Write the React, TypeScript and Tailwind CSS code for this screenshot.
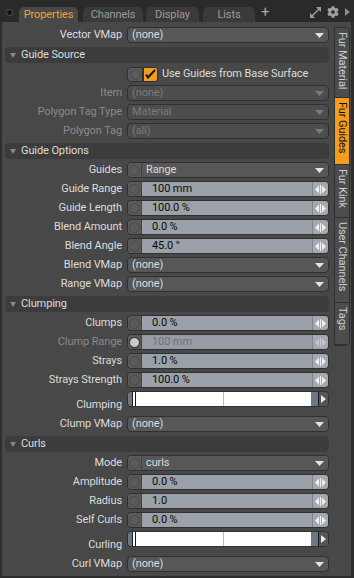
import React from "react";
import { FaCog } from "react-icons/fa";

const Caret = ({ dim = false }: { dim?: boolean }) => (
  <svg width="9" height="5" viewBox="0 0 9 5" className="shrink-0">
    <path d="M0 0H9L4.5 5Z" fill={dim ? "#7a7a7a" : "#e2e2e2"} />
  </svg>
);

const Spin = ({ dim = false }: { dim?: boolean }) => (
  <svg width="11" height="9" viewBox="0 0 11 9">
    <path d="M0 4.5L4 0.5V8.5Z" fill={dim ? "#c4c8cc" : "#eef0f2"} />
    <rect x="5" y="0" width="1" height="9" fill={dim ? "#c4c8cc" : "#eef0f2"} />
    <path d="M7 0.5L11 4.5L7 8.5Z" fill={dim ? "#c4c8cc" : "#eef0f2"} />
  </svg>
);

const Circle = ({ filled = false }: { filled?: boolean }) => (
  <div
    className={`w-[11px] h-[11px] rounded-full border ${
      filled ? "bg-[#c9c9c9] border-[#262626]" : "bg-[#5a5a5a] border-[#4a4a4a]"
    }`}
  />
);

function Label({ children, dim = false }: { children: React.ReactNode; dim?: boolean }) {
  return (
    <div
      className={`w-[117px] shrink-0 text-right whitespace-nowrap leading-[16px] ${
        dim ? "text-[#8a8a8a]" : "text-[#dcdcdc]"
      }`}
    >
      {children}
    </div>
  );
}

function Row({ label, dim, children }: { label: string; dim?: boolean; children: React.ReactNode }) {
  return (
    <div className="flex items-center gap-[5px] h-[16px]">
      <Label dim={dim}>{label}</Label>
      <div className="w-[202px] h-[16px] shrink-0">{children}</div>
    </div>
  );
}

function Dropdown({ value, disabled }: { value: string; disabled?: boolean }) {
  return (
    <div
      className={`flex items-center h-full rounded-[4px] border border-[#303030] pl-[4px] pr-[4px] ${
        disabled ? "bg-[#4d4d4d] text-[#7a7a7a]" : "bg-[#575757] text-[#dadada]"
      }`}
    >
      <span className="flex-1 leading-[14px]">{value}</span>
      <Caret dim={disabled} />
    </div>
  );
}

function CircleDropdown({ value }: { value: string }) {
  return (
    <div className="flex h-full rounded-[4px] border border-[#303030] overflow-hidden">
      <div className="w-[14px] shrink-0 bg-[#5a5a5a] border-r border-[#444] flex items-center justify-center">
        <Circle />
      </div>
      <div className="flex-1 flex items-center bg-[#575757] text-[#dadada] pl-[4px] pr-[4px]">
        <span className="flex-1 leading-[14px]">{value}</span>
        <Caret />
      </div>
    </div>
  );
}

function NumField({ value, disabled }: { value: string; disabled?: boolean }) {
  return (
    <div className="flex h-full rounded-[4px] border border-[#303030] overflow-hidden">
      <div className="w-[14px] shrink-0 bg-[#5a5a5a] border-r border-[#444] flex items-center justify-center">
        <Circle filled={disabled} />
      </div>
      <div
        className={`flex-1 flex items-center pl-[10px] leading-[14px] ${
          disabled ? "bg-[#959ca3] text-[#6c7278]" : "bg-[#9aa1a8] text-[#0a0a0a]"
        }`}
      >
        {value}
      </div>
      <div className="w-[16px] shrink-0 bg-[#a3a9af] border-l border-[#80868c] flex items-center justify-center">
        <Spin dim={disabled} />
      </div>
    </div>
  );
}

function Gradient({ label }: { label: string }) {
  return (
    <div className="flex items-end gap-[5px] h-[22px]">
      <Label>{label}</Label>
      <div className="w-[202px] h-[16px] shrink-0 self-start flex rounded-[4px] border border-[#303030] overflow-hidden">
        <div className="w-[4px] bg-[#6b7888]" />
        <div className="w-[4px] bg-white border-x border-[#1a1a1a]" />
        <div className="flex-1 bg-white flex justify-center">
          <div className="w-px h-full bg-[#bdbdbd]" />
        </div>
        <div className="w-[7px] bg-[#6b7888]" />
        <div className="w-[10px] bg-[#555] border-l border-[#1e1e1e] flex items-center justify-center">
          <svg width="5" height="8" viewBox="0 0 5 8">
            <path d="M0 0L5 4L0 8Z" fill="#e8e8e8" />
          </svg>
        </div>
      </div>
    </div>
  );
}

function Header({ title }: { title: string }) {
  return (
    <div className="mt-[1px] flex items-center h-[16px] rounded-[4px] bg-[#3c3c3c] text-[#dcdcdc] pl-[5px]">
      <svg width="6" height="5" viewBox="0 0 6 5" className="mr-[5px]">
        <path d="M0 0H6L3 5Z" fill="#888" />
      </svg>
      <span className="leading-[16px]">{title}</span>
    </div>
  );
}

function Tab({ label, active, w }: { label: string; active?: boolean; w: string }) {
  return (
    <div
      className={`${w} h-[15px] rounded-t-[5px] flex items-center justify-center leading-[15px] ${
        active ? "bg-[#484848] text-[#f2a23a]" : "bg-[#3a3a3a] text-[#9a9a9a]"
      }`}
    >
      {label}
    </div>
  );
}

function VTab({ label, h, active }: { label: string; h: string; active?: boolean }) {
  return (
    <div
      className={`${h} flex justify-center pt-[4px] border-b border-[#303030] ${
        active ? "bg-[#f29d1f] text-[#111]" : "bg-[#4c4c4c] text-[#c9ced6]"
      }`}
    >
      <span className="[writing-mode:vertical-rl] leading-[15px]">{label}</span>
    </div>
  );
}

export default function App() {
  return (
    <div className="w-[354px] h-[578px] bg-[#2a2a2a] flex flex-col text-[11px] tracking-[-0.1px] font-['Roboto','Liberation_Sans',sans-serif] overflow-hidden select-none">
      {/* top bar */}
      <div className="h-[22px] flex items-end shrink-0">
        <div className="w-[19px] h-full flex items-center justify-center pt-[3px]">
          <div className="w-[7px] h-[7px] rounded-full bg-[#111] border border-[#555]" />
        </div>
        <div className="flex items-end h-full pt-[7px]">
          <Tab label="Properties" active w="w-[59px]" />
          <div className="w-[5px]" />
          <Tab label="Channels" w="w-[60px]" />
          <div className="w-[3px]" />
          <Tab label="Display" w="w-[53px]" />
          <div className="w-[4px]" />
          <Tab label="Lists" w="w-[52px]" />
        </div>
        <div className="text-[#a8a8a8] text-[15px] leading-[15px] ml-[6px] mb-[2px]">+</div>
        <div className="flex-1" />
        <div className="flex items-center gap-[6px] h-full pt-[2px] pr-[4px]">
          <svg width="11" height="11" viewBox="0 0 11 11">
            <path d="M6 0H11V5L9 3L3 9L5 11H0V6L2 8L8 2Z" fill="#9a9a9a" />
          </svg>
          <FaCog size={12} color="#a0a0a0" />
          <svg width="5" height="8" viewBox="0 0 5 8">
            <path d="M0 0L5 4L0 8Z" fill="#8a8a8a" />
          </svg>
        </div>
      </div>

      {/* body */}
      <div className="flex-1 flex bg-[#484848] border-l-[2px] border-r-[3px] border-b-[2px] border-[#2e2e2e]">
        <div className="w-[327px] shrink-0 flex flex-col gap-[3px] pl-[3px] pt-[5px]">
          <Row label="Vector VMap">
            <Dropdown value="(none)" />
          </Row>
          <Header title="Guide Source" />
          <div className="flex items-center gap-[5px] h-[16px]">
            <div className="w-[117px] shrink-0" />
            <div className="flex items-center h-[15px]">
              <div className="w-[16px] h-[15px] bg-[#5a5a5a] rounded-l-[4px] border border-[#303030] flex items-center justify-center">
                <Circle />
              </div>
              <div className="w-[15px] h-[15px] bg-[#f29d1f] rounded-r-[3px] border border-[#303030] flex items-center justify-center">
                <svg width="11" height="10" viewBox="0 0 11 10">
                  <path d="M1 5.5L3 8.5L10 1" stroke="#111" strokeWidth="2" fill="none" />
                </svg>
              </div>
              <span className="ml-[4px] text-[#dcdcdc] leading-[16px] whitespace-nowrap">
                Use Guides from Base Surface
              </span>
            </div>
          </div>
          <Row label="Item" dim>
            <Dropdown value="(none)" disabled />
          </Row>
          <Row label="Polygon Tag Type" dim>
            <Dropdown value="Material" disabled />
          </Row>
          <Row label="Polygon Tag" dim>
            <Dropdown value="(all)" disabled />
          </Row>
          <Header title="Guide Options" />
          <Row label="Guides">
            <CircleDropdown value="Range" />
          </Row>
          <Row label="Guide Range">
            <NumField value="100 mm" />
          </Row>
          <Row label="Guide Length">
            <NumField value="100.0 %" />
          </Row>
          <Row label="Blend Amount">
            <NumField value="0.0 %" />
          </Row>
          <Row label="Blend Angle">
            <NumField value="45.0 °" />
          </Row>
          <Row label="Blend VMap">
            <Dropdown value="(none)" />
          </Row>
          <Row label="Range VMap">
            <Dropdown value="(none)" />
          </Row>
          <Header title="Clumping" />
          <Row label="Clumps">
            <NumField value="0.0 %" />
          </Row>
          <Row label="Clump Range" dim>
            <NumField value="100 mm" disabled />
          </Row>
          <Row label="Strays">
            <NumField value="1.0 %" />
          </Row>
          <Row label="Strays Strength">
            <NumField value="100.0 %" />
          </Row>
          <Gradient label="Clumping" />
          <Row label="Clump VMap">
            <Dropdown value="(none)" />
          </Row>
          <Header title="Curls" />
          <Row label="Mode">
            <CircleDropdown value="curls" />
          </Row>
          <Row label="Amplitude">
            <NumField value="0.0 %" />
          </Row>
          <Row label="Radius">
            <NumField value="1.0" />
          </Row>
          <Row label="Self Curls">
            <NumField value="0.0 %" />
          </Row>
          <Gradient label="Curling" />
          <Row label="Curl VMap">
            <Dropdown value="(none)" />
          </Row>
        </div>
        {/* vertical tabs */}
        <div className="ml-[5px] mt-[5px] w-[16px] shrink-0 self-start flex flex-col rounded-tr-[5px] rounded-br-[5px] border border-[#303030] overflow-hidden">
          <VTab label="Fur Material" h="h-[70px]" />
          <VTab label="Fur Guides" h="h-[67px]" active />
          <VTab label="Fur Kink" h="h-[53px]" />
          <VTab label="User Channels" h="h-[85px]" />
          <VTab label="Tags" h="h-[42px]" />
        </div>
      </div>
    </div>
  );
}
